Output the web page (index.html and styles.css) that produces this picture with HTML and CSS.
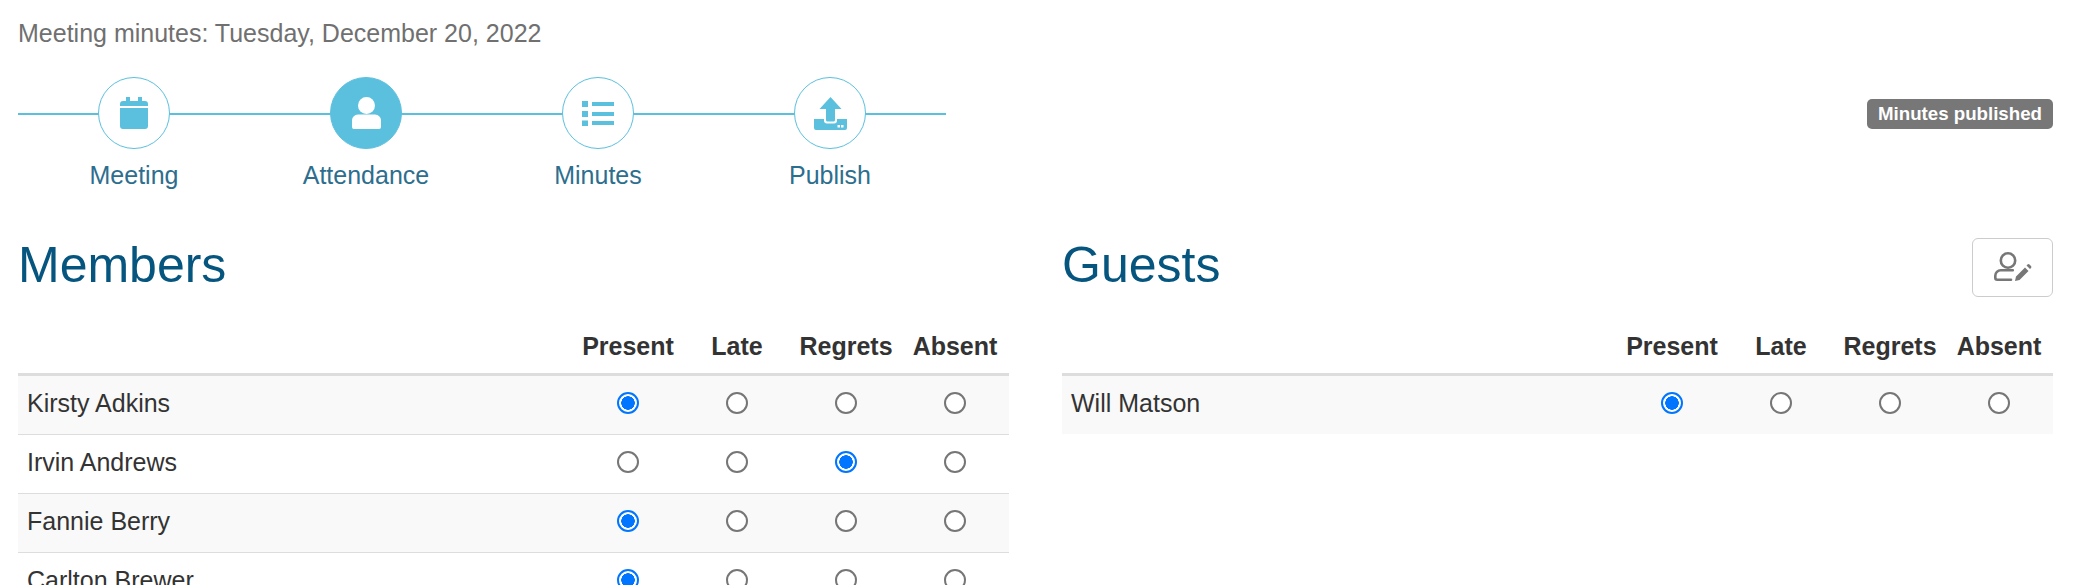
FILE: index.html
```html
<!DOCTYPE html>
<html lang="en">
<head>
    <meta charset="UTF-8">
    <title>Meeting minutes</title>
    <link rel="stylesheet" href="styles.css">
</head>
<body>
    <p class="page-title">Meeting minutes: Tuesday, December 20, 2022</p>

    <div class="top-row">
        <div class="stepper">
            <div class="step">
                <div class="step-circle">
                    <svg width="28" height="32" viewBox="0 0 28 32"><path fill="#5bc0de" d="M6 0h4v4h8V0h4v4h3a3 3 0 0 1 3 3v2H0V7a3 3 0 0 1 3-3h3zM0 11h28v18a3 3 0 0 1-3 3H3a3 3 0 0 1-3-3z"/></svg>
                </div>
                <div class="step-label">Meeting</div>
            </div>
            <div class="step active">
                <div class="step-circle">
                    <svg width="29" height="32" viewBox="0 0 29 32"><circle cx="14.500" cy="8.500" r="8.500" fill="#fff"/><path fill="#fff" d="M0 30v-6a6 6 0 0 1 6-6.500h17a6 6 0 0 1 6 6.500v6a2 2 0 0 1-2 2H2a2 2 0 0 1-2-2z"/></svg>
                </div>
                <div class="step-label">Attendance</div>
            </div>
            <div class="step">
                <div class="step-circle">
                    <svg width="32" height="25" viewBox="0 0 32 25"><path fill="#5bc0de" d="M0 0h6v6H0zM10 1h22v4H10zM0 10h6v6H0zM10 11h22v4H10zM0 19.500h6v5.500H0zM10 20h22v4H10z"/></svg>
                </div>
                <div class="step-label">Minutes</div>
            </div>
            <div class="step">
                <div class="step-circle">
                    <svg width="33" height="33" viewBox="0 0 33 33"><path fill="#5bc0de" d="M16.500 0l11 12h-6.500v11a1.500 1.500 0 0 1-1.500 1.500h-6a1.500 1.500 0 0 1-1.500-1.500V12H5.500zM0 22h10v1.500a3 3 0 0 0 3 3h7a3 3 0 0 0 3-3V22h10v9a2 2 0 0 1-2 2H2a2 2 0 0 1-2-2z"/><path fill="#fff" d="M23.500 28h2.500v2.500h-2.500zM27 28h2.500v2.500H27z"/></svg>
                </div>
                <div class="step-label">Publish</div>
            </div>
        </div>
        <span class="badge">Minutes published</span>
    </div>

    <div class="columns">
        <section>
            <div class="section-head">
                <h2>Members</h2>
            </div>
            <table class="attendance">
                <thead>
                    <tr><th></th><th>Present</th><th>Late</th><th>Regrets</th><th>Absent</th></tr>
                </thead>
                <tbody>
                    <tr>
                        <td>Kirsty Adkins</td>
                        <td><input type="radio" name="m1" checked></td>
                        <td><input type="radio" name="m1"></td>
                        <td><input type="radio" name="m1"></td>
                        <td><input type="radio" name="m1"></td>
                    </tr>
                    <tr>
                        <td>Irvin Andrews</td>
                        <td><input type="radio" name="m2"></td>
                        <td><input type="radio" name="m2"></td>
                        <td><input type="radio" name="m2" checked></td>
                        <td><input type="radio" name="m2"></td>
                    </tr>
                    <tr>
                        <td>Fannie Berry</td>
                        <td><input type="radio" name="m3" checked></td>
                        <td><input type="radio" name="m3"></td>
                        <td><input type="radio" name="m3"></td>
                        <td><input type="radio" name="m3"></td>
                    </tr>
                    <tr>
                        <td>Carlton Brewer</td>
                        <td><input type="radio" name="m4" checked></td>
                        <td><input type="radio" name="m4"></td>
                        <td><input type="radio" name="m4"></td>
                        <td><input type="radio" name="m4"></td>
                    </tr>
                </tbody>
            </table>
        </section>

        <section>
            <div class="section-head">
                <h2>Guests</h2>
                <button type="button" class="icon-btn">
                    <svg width="38" height="29" viewBox="0 0 38 29" fill="none" stroke="#777" stroke-width="2.600" stroke-linecap="round"><circle cx="14" cy="8.500" r="7.200"/><path d="M17 27.700H3.300a2 2 0 0 1-2-2v-2a5.500 5.500 0 0 1 5.500-5.500h12"/><path fill="#777" stroke="none" d="M21 29l1-4.500L31 15.500l3.500 3.500-9 9zM32.500 13.500l1-1a1.500 1.500 0 0 1 2 0l1.500 1.500a1.500 1.500 0 0 1 0 2l-1 1z"/></svg>
                </button>
            </div>
            <table class="attendance">
                <thead>
                    <tr><th></th><th>Present</th><th>Late</th><th>Regrets</th><th>Absent</th></tr>
                </thead>
                <tbody>
                    <tr>
                        <td>Will Matson</td>
                        <td><input type="radio" name="g1" checked></td>
                        <td><input type="radio" name="g1"></td>
                        <td><input type="radio" name="g1"></td>
                        <td><input type="radio" name="g1"></td>
                    </tr>
                </tbody>
            </table>
        </section>
    </div>
</body>
</html>
```

FILE: styles.css
```css
* {
    box-sizing: border-box;
}

html,
body {
    height: 585px;
    overflow: hidden;
}

body {
    margin: 0;
    padding: 0 42px 0 18px;
    font-family: "Liberation Sans", Arial, sans-serif;
    font-size: 25px;
    color: #333;
    background: #fff;
}

.page-title {
    margin: 0;
    padding-top: 16px;
    line-height: 34px;
    color: #707070;
}

.top-row {
    display: flex;
    justify-content: space-between;
    align-items: flex-start;
    margin-top: 27px;
}

.stepper {
    position: relative;
    display: flex;
    width: 928px;
}

/* line runs behind the circles */
.stepper::before {
    content: "";
    position: absolute;
    left: 0;
    right: 0;
    top: 36px;
    height: 2px;
    background: #5bc0de;
}

.step {
    position: relative;
    flex: 1;
    display: flex;
    flex-direction: column;
    align-items: center;
}

.step-circle {
    width: 72px;
    height: 72px;
    display: flex;
    align-items: center;
    justify-content: center;
    border: 1px solid #5bc0de;
    border-radius: 50%;
    background: #fff;
}

.step.active .step-circle {
    background: #5bc0de;
}

.step-label {
    margin-top: 9px;
    line-height: 34px;
    color: #2d6e8e;
}

.badge {
    margin-top: 22px;
    height: 30px;
    padding: 0 11px;
    font-size: 18.700px;
    font-weight: bold;
    line-height: 30px;
    color: #fff;
    background: #777;
    border-radius: 5px;
}

.columns {
    display: grid;
    grid-template-columns: 991px 991px;
    gap: 53px;
    margin-top: 46px;
}

.section-head {
    display: flex;
    justify-content: space-between;
    align-items: center;
    height: 59px;
}

h2 {
    margin: 0;
    padding-bottom: 5px;
    font-size: 50px;
    font-weight: normal;
    color: #05557f;
}

.icon-btn {
    width: 81px;
    height: 59px;
    display: flex;
    align-items: center;
    justify-content: center;
    padding: 0 0 3px;
    background: #fff;
    border: 1px solid #ccc;
    border-radius: 6px;
}

.attendance {
    width: 100%;
    table-layout: fixed;
    border-collapse: separate;
    border-spacing: 0;
}

.attendance th {
    width: 109px;
    height: 79px;
    padding: 0 0 10px 1px;
    vertical-align: bottom;
    text-align: center;
    line-height: 34px;
    border-bottom: 3px solid #ddd;
}

.attendance th:first-child {
    width: auto;
}

.attendance td {
    height: 59px;
    padding: 0;
    text-align: center;
    border-top: 1px solid #ddd;
}

.attendance td:first-child {
    padding-left: 9px;
    padding-bottom: 3px;
    text-align: left;
}

.attendance tbody tr:first-child td {
    height: 58px;
    border-top: none;
}

.attendance tbody tr:nth-child(odd) {
    background: #f9f9f9;
}

/* radios drawn by hand, the native ones come out too thin at this size */
.attendance input {
    display: block;
    width: 22px;
    height: 22px;
    margin: 0 auto 4px;
    appearance: none;
    border: 2px solid #767676;
    border-radius: 50%;
    background: #fff;
}

.attendance input:checked {
    border-color: #0075ff;
    background: radial-gradient(circle, #0075ff 0 6.500px, #fff 7px);
}
```
